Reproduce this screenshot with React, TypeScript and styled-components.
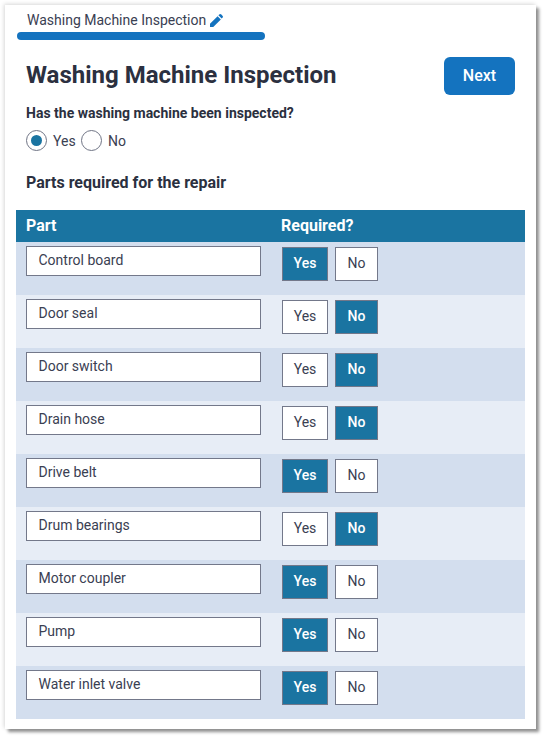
import React from "react";
import styled, { createGlobalStyle } from "styled-components";

const Global = createGlobalStyle`
  html, body { margin: 0; padding: 0; background: #fff; }
  body { font-family: Roboto, "Liberation Sans", sans-serif; color: #2b3040; }
  * { box-sizing: border-box; }
`;

const Page = styled.div`
  width: 545px;
  height: 738px;
  padding: 5px 0 0 5px;
  overflow: hidden;
`;

const Card = styled.div`
  width: 531px;
  height: 724px;
  background: #fff;
  box-shadow: 3px 3px 3px #8f8f8f, -1px -1px 4px #d8d8d8;
  padding: 0 11px;
  display: flex;
  flex-direction: column;
`;

const Tab = styled.div`
  width: 248px;
  margin-left: 1px;
  display: flex;
  flex-direction: column;
`;

const TabLabel = styled.div`
  height: 27px;
  padding: 7px 0 0 10px;
  display: flex;
  align-items: flex-start;
  gap: 4px;
  font-size: 14px;
  line-height: 17px;
  color: #3a4052;
`;

const TabBar = styled.div`
  height: 8px;
  background: #1473bf;
  border-radius: 4px;
`;

const Header = styled.div`
  display: flex;
  justify-content: space-between;
  align-items: flex-start;
  margin-top: 17px;
  padding: 0 10px;
`;

const Title = styled.h1`
  margin: 4px 0 0;
  font-size: 24px;
  line-height: 28px;
  font-weight: 700;
  color: #2b3040;
`;

const NextButton = styled.button`
  width: 71px;
  height: 38px;
  border: none;
  border-radius: 6px;
  background: #1473bf;
  color: #fff;
  font-family: inherit;
  font-size: 16px;
  font-weight: 500;
  padding: 0 0 2px;
`;

const Question = styled.div`
  margin: 8px 0 0 10px;
  height: 20px;
  font-size: 14px;
  line-height: 20px;
  font-weight: 700;
  color: #2b3040;
`;

const RadioRow = styled.div`
  display: flex;
  align-items: center;
  height: 21px;
  margin: 7px 0 0 10px;
`;

const Radio = styled.span<{ $on?: boolean }>`
  width: 21px;
  height: 21px;
  border-radius: 50%;
  border: 1px solid #6f7485;
  background: #fff;
  display: flex;
  align-items: center;
  justify-content: center;
  &::after {
    content: "";
    display: ${(p) => (p.$on ? "block" : "none")};
    width: 11px;
    height: 11px;
    border-radius: 50%;
    background: #1a74a1;
  }
`;

const RadioText = styled.span<{ $wide?: boolean }>`
  font-size: 14px;
  color: #3a4052;
  margin-left: 6px;
  width: ${(p) => (p.$wide ? "28px" : "auto")};
`;

const SubHeading = styled.h2`
  margin: 22px 0 0 10px;
  height: 20px;
  font-size: 16px;
  line-height: 20px;
  font-weight: 700;
  color: #2b3040;
`;

const Table = styled.div`
  width: 509px;
  margin-top: 17px;
  display: flex;
  flex-direction: column;
`;

const HeadRow = styled.div`
  height: 32px;
  background: #1a74a1;
  color: #fff;
  display: grid;
  grid-template-columns: 255px 1fr;
  padding: 0 0 2px 10px;
  align-items: center;
  font-size: 16px;
  font-weight: 700;
`;

const Row = styled.div<{ $odd: boolean }>`
  height: 53px;
  background: ${(p) => (p.$odd ? "#d3deee" : "#e7edf6")};
  display: grid;
  grid-template-columns: 256px 1fr;
  padding: 4px 0 0 10px;
  align-items: start;
`;

const PartInput = styled.div`
  width: 235px;
  height: 30px;
  border: 1px solid #73788a;
  background: #fff;
  padding: 5px 0 0 11.5px;
  font-size: 14px;
  line-height: 17px;
  color: #3a4052;
`;

const Toggle = styled.div`
  display: flex;
  gap: 7px;
  padding-top: 1px;
`;

const ToggleButton = styled.div<{ $on: boolean; $w: number }>`
  width: ${(p) => p.$w}px;
  height: 34px;
  border: 1px solid #73788a;
  padding-bottom: 2px;
  background: ${(p) => (p.$on ? "#1a74a1" : "#fff")};
  color: ${(p) => (p.$on ? "#fff" : "#3a4052")};
  font-size: 14px;
  font-weight: ${(p) => (p.$on ? 500 : 400)};
  display: flex;
  align-items: center;
  justify-content: center;
`;

const parts: [string, boolean][] = [
  ["Control board", true],
  ["Door seal", false],
  ["Door switch", false],
  ["Drain hose", false],
  ["Drive belt", true],
  ["Drum bearings", false],
  ["Motor coupler", true],
  ["Pump", true],
  ["Water inlet valve", true],
];

export default function App() {
  return (
    <Page>
      <Global />
      <Card>
        <Tab>
          <TabLabel>
            Washing Machine Inspection
            <svg width="13" height="13" viewBox="0 0 24 24" fill="#1473bf" style={{ marginTop: 2 }}>
              <path d="M0 24v-6L14 4l6 6L6 24H0zM15.500 2.500l1.500-1.500c1.300-1.300 2.700-1.300 4 0l2 2c1.300 1.300 1.300 2.700 0 4l-1.500 1.500-6-6z" />
            </svg>
          </TabLabel>
          <TabBar />
        </Tab>
        <Header>
          <Title>Washing Machine Inspection</Title>
          <NextButton>Next</NextButton>
        </Header>
        <Question>Has the washing machine been inspected?</Question>
        <RadioRow>
          <Radio $on />
          <RadioText $wide>Yes</RadioText>
          <Radio />
          <RadioText>No</RadioText>
        </RadioRow>
        <SubHeading>Parts required for the repair</SubHeading>
        <Table>
          <HeadRow>
            <span>Part</span>
            <span>Required?</span>
          </HeadRow>
          {parts.map(([name, req], i) => (
            <Row key={name} $odd={i % 2 === 0}>
              <PartInput>{name}</PartInput>
              <Toggle>
                <ToggleButton $on={req} $w={46}>Yes</ToggleButton>
                <ToggleButton $on={!req} $w={43}>No</ToggleButton>
              </Toggle>
            </Row>
          ))}
        </Table>
      </Card>
    </Page>
  );
}
